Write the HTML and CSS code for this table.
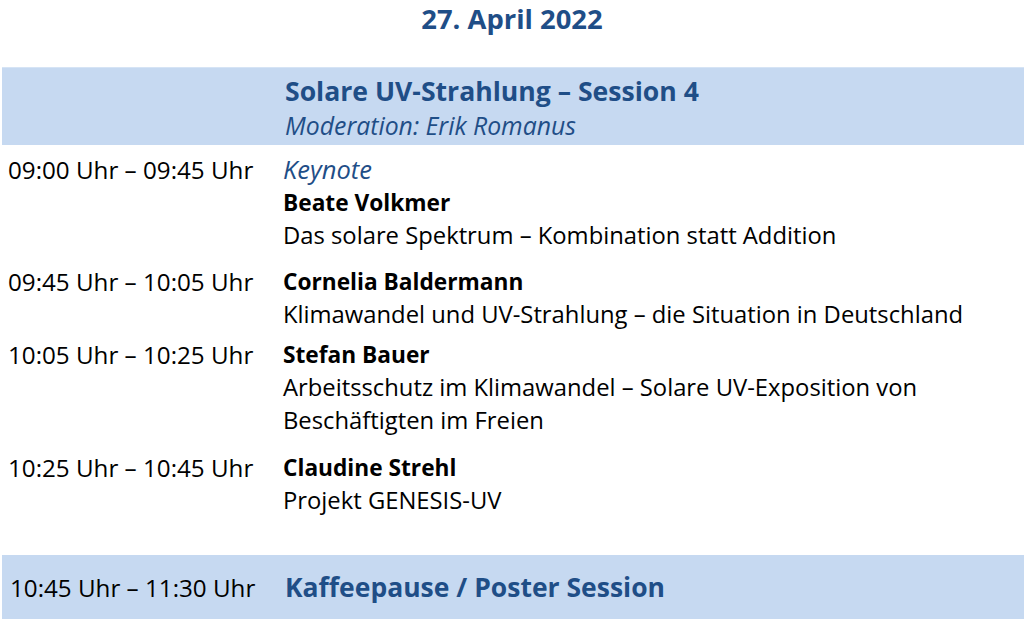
FILE: index.html
```html
<!DOCTYPE html>
<html lang="de">
<head>
<meta charset="utf-8">
<link rel="stylesheet" href="styles.css">
</head>
<body>
<div class="page">
  <h1 class="date">27. April 2022</h1>
  <div class="band session">
    <div class="col-time"></div>
    <div class="col-main">
      <div class="session-title">Solare UV-Strahlung – Session 4</div>
      <div class="moderation">Moderation: Erik Romanus</div>
    </div>
  </div>
  <div class="row r1">
    <div class="col-time">09:00 Uhr – 09:45 Uhr</div>
    <div class="col-main">
      <div class="kind">Keynote</div>
      <div class="speaker">Beate Volkmer</div>
      <div class="talk">Das solare Spektrum – Kombination statt Addition</div>
    </div>
  </div>
  <div class="row r2">
    <div class="col-time">09:45 Uhr – 10:05 Uhr</div>
    <div class="col-main">
      <div class="speaker">Cornelia Baldermann</div>
      <div class="talk">Klimawandel und UV-Strahlung – die Situation in Deutschland</div>
    </div>
  </div>
  <div class="row r3">
    <div class="col-time">10:05 Uhr – 10:25 Uhr</div>
    <div class="col-main">
      <div class="speaker">Stefan Bauer</div>
      <div class="talk">Arbeitsschutz im Klimawandel – Solare UV-Exposition von<br>Beschäftigten im Freien</div>
    </div>
  </div>
  <div class="row r4">
    <div class="col-time">10:25 Uhr – 10:45 Uhr</div>
    <div class="col-main">
      <div class="speaker">Claudine Strehl</div>
      <div class="talk">Projekt GENESIS-UV</div>
    </div>
  </div>
  <div class="band pause">
    <div class="col-time">10:45 Uhr – 11:30 Uhr</div>
    <div class="col-main">
      <div class="pause-title">Kaffeepause / Poster Session</div>
    </div>
  </div>
</div>
</body>
</html>
```
FILE: styles.css
```css
html, body {
  margin: 0;
  padding: 0;
  background: #ffffff;
}
body {
  font-family: "Open Sans", Lato, sans-serif;
  color: #000000;
  font-size: 23.8px;
  line-height: 33px;
}
.page {
  width: 1024px;
  height: 620px;
  overflow: hidden;
}
.date {
  margin: 0;
  padding-top: 0;
  height: 67px;
  box-sizing: border-box;
  text-align: center;
  font-size: 27.4px;
  line-height: 37px;
  font-weight: 700;
  color: #1f4e87;
}
.band {
  background: #c6d9f1;
  display: flex;
  margin-left: 2px;
}
.row {
  display: flex;
}
.col-time {
  width: 275px;
  padding-left: 8px;
  flex: none;
  font-size: 24.2px;
}
.col-main {
  flex: 1;
}
.session {
  height: 78px;
  padding-top: 6px;
  box-sizing: border-box;
  border-top: 1px solid #d6e4f5;
}
.session-title {
  font-size: 26.6px;
  font-weight: 700;
  line-height: 34px;
  color: #1f4e87;
}
.moderation {
  font-size: 24.8px;
  font-style: italic;
  color: #1f4e87;
  line-height: 34px;
}
.kind {
  font-size: 25.5px;
  font-style: italic;
  color: #1f4e87;
}
.speaker {
  font-size: 22.7px;
  font-weight: 700;
}
.r1 { padding-top: 8px; }
.r2 { padding-top: 13px; }
.r3 { padding-top: 7px; }
.r4 { padding-top: 14px; }
.pause {
  margin-top: 38px;
  height: 64px;
  align-items: center;
}
.pause-title {
  font-size: 26.5px;
  font-weight: 700;
  color: #1f4e87;
}
```
